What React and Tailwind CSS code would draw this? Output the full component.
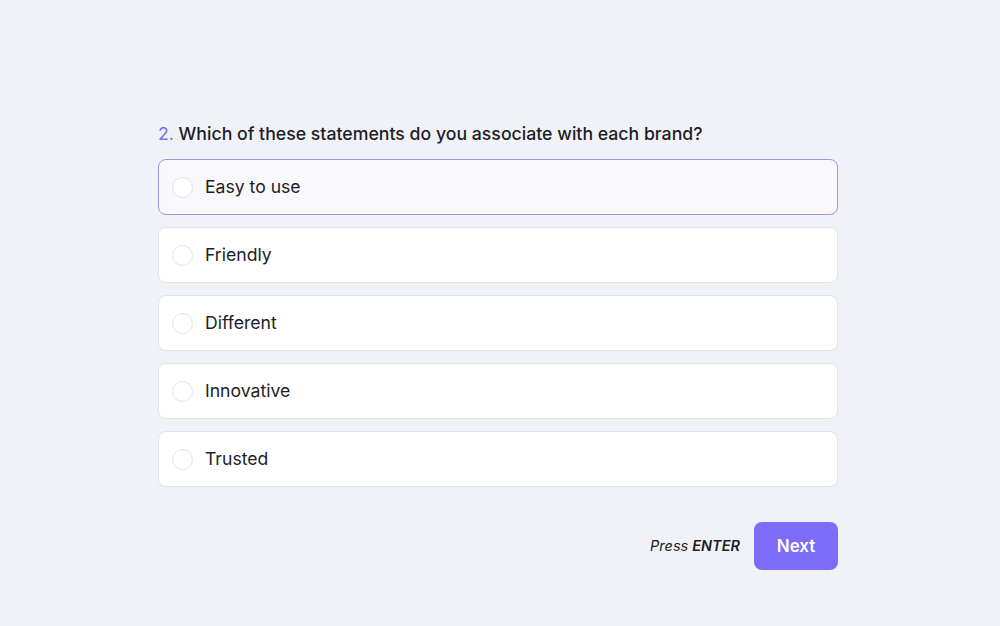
import React from 'react'

const options = ['Easy to use', 'Friendly', 'Different', 'Innovative', 'Trusted']

function Option({ label, active }) {
  return (
    <div
      className={
        'flex h-[56px] items-center rounded-lg border px-[13px] ' +
        (active ? 'border-[#9f95e4] bg-[#f8f8fd]' : 'border-[#e1e3ea] bg-white')
      }
    >
      <span className="h-[21px] w-[21px] shrink-0 rounded-full border border-[#e2e3e8] bg-white" />
      <span className="ml-[12px] text-[17.6px] text-[#1d1d24]">{label}</span>
    </div>
  )
}

export default function App() {
  const [active] = React.useState(0)
  return (
    <div
      className="min-h-[626px] w-full bg-[#f1f2f7] pt-[122px]"
      style={{ fontFamily: 'Inter, "Noto Sans", sans-serif' }}
    >
      <div className="mx-auto w-[680px] translate-x-[-2px]">
        <h2 className="h-[24px] text-[17.7px] leading-[24px] font-medium text-[#1d1d24]">
          <span className="font-normal text-[#7b6cf0]">2.</span> Which of these statements do you associate with each brand?
        </h2>
        <div className="mt-[13px] flex flex-col gap-[12px]">
          {options.map((o, i) => (
            <Option key={o} label={o} active={i === active} />
          ))}
        </div>
        <div className="mt-[35px] flex items-center justify-end gap-[14px]">
          <span className="text-[14.5px] italic text-[#1d1d24]">
            Press <span className="font-semibold">ENTER</span>
          </span>
          <button className="h-[48px] w-[84px] rounded-lg bg-[#7c6cf8] pt-[2px] text-[17px] font-semibold text-white">
            Next
          </button>
        </div>
      </div>
    </div>
  )
}
